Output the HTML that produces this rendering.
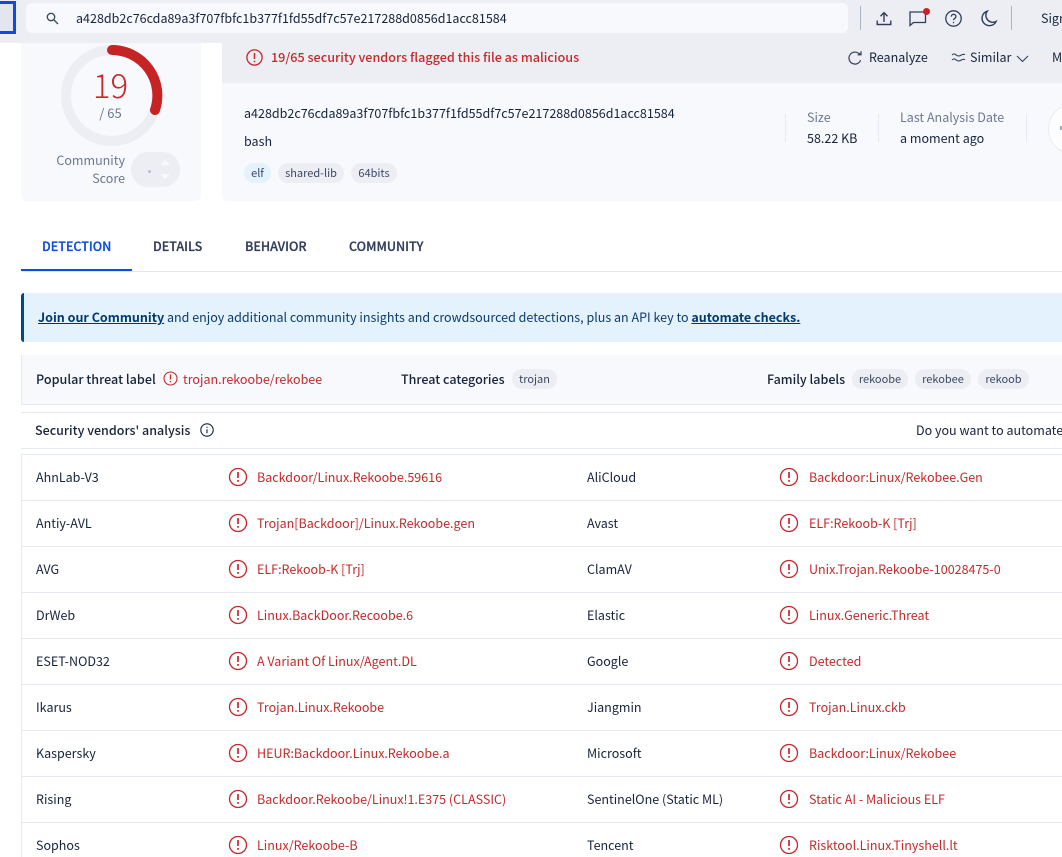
<!DOCTYPE html>
<html><head><meta charset="utf-8"><style>
html,body{margin:0;padding:0;background:#fff;}
#p{position:relative;width:1062px;height:857px;overflow:hidden;background:#fff;font-family:"Noto Sans CJK JP","Liberation Sans",sans-serif;font-size:12.52px;color:#313d5a;}
.a{position:absolute;white-space:nowrap;}
.t{line-height:18px;}
.r{color:#c4292c;}
.d{color:#16233b;}
.tab{font-size:12.5px;font-weight:500;-webkit-text-stroke:.25px currentColor;}
.pill{position:absolute;height:20px;line-height:21px;border-radius:10px;background:#eceef4;text-align:center;font-size:11px;color:#3b4762;}
.line{position:absolute;background:#e5e9f1;}
svg{position:absolute;overflow:visible;}
</style></head><body><div id="p">

<!-- summary cards -->
<div class="a" style="left:21px;top:43px;width:180px;height:158px;background:#f8f9fc;border-radius:0 0 6px 6px;"></div>
<div class="a" style="left:222px;top:43px;width:840px;height:158px;background:#f8f9fc;border-radius:0 0 0 6px;"></div>
<div class="a" style="left:222px;top:43px;width:840px;height:40px;background:#eceef4;"></div>

<!-- top bar -->
<div class="a" style="left:0;top:0;width:1062px;height:43px;background:#eceef4;"></div>
<div class="a" style="left:-6px;top:1px;width:16px;height:27px;border:3px solid #0b4de0;background:#e3e6ee;"></div>
<div class="a" style="left:26px;top:3px;width:822px;height:30px;background:#f8f9fc;border-radius:6px;"></div>
<svg style="left:46px;top:12px" width="13" height="13" viewBox="0 0 13 13" fill="none" stroke="#3b4762" stroke-width="1.3"><circle cx="5" cy="5" r="3.7"/><path d="M8 8l4 4"/></svg>
<div class="a t d" style="left:76px;top:9px;">a428db2c76cda89a3f707fbfc1b377f1fd55df7c57e217288d0856d1acc81584</div>
<div class="a" style="left:860px;top:6px;width:1px;height:24px;background:#aab4c8;"></div>
<div class="a" style="left:1011px;top:6px;width:1px;height:24px;background:#aab4c8;"></div>
<svg style="left:876px;top:11px" width="16" height="15" viewBox="0 0 16 15" fill="none" stroke="#313d5a" stroke-width="1.4"><path d="M8 11V2M4.5 5.2L8 1.6l3.5 3.6M1.2 9.5v4h13.6v-4"/></svg>
<svg style="left:909px;top:10px" width="18" height="16" viewBox="0 0 18 16" fill="none" stroke="#313d5a" stroke-width="1.3"><path d="M1 2h15.5v10.5H4.5L1 15.5z"/></svg>
<div class="a" style="left:923px;top:8px;width:7px;height:7px;border-radius:50%;background:#cc1f26;"></div>
<svg style="left:945px;top:10px" width="17" height="17" viewBox="0 0 17 17" fill="none" stroke="#313d5a" stroke-width="1.3"><circle cx="8.5" cy="8.5" r="7.7"/><path d="M6.3 6.6c0-3 4.6-3 4.6 0 0 1.9-2.4 1.700-2.400 3.700"/><path d="M8.500 12v1.200"/></svg>
<svg style="left:981px;top:10px" width="16" height="17" viewBox="0 0 16 17" fill="none" stroke="#313d5a" stroke-width="1.4"><path d="M6.200 1.200a7.400 7.400 0 1 0 8.900 10.300A7 7 0 0 1 6.200 1.200z"/></svg>
<div class="a t d" style="left:1041px;top:9px;">Sign in</div>

<!-- gauge -->
<svg style="left:60.500px;top:45px" width="102" height="102" viewBox="0 0 102 102" fill="none">
<circle cx="50.500" cy="50.500" r="45.500" stroke="#eceef4" stroke-width="10"/>
<path d="M51 5A45.500 45.500 0 0 1 94 65" stroke="#c62325" stroke-width="10" stroke-linecap="round"/>
</svg>
<div class="a r" style="left:60px;width:101px;text-align:center;top:64px;font-size:33px;line-height:40px;font-weight:300;">19</div>
<div class="a" style="left:60px;width:101px;text-align:center;top:104px;font-size:13px;line-height:18px;color:#6b7892;">/ 65</div>
<div class="a" style="left:40px;width:85px;text-align:right;top:151px;line-height:18px;color:#6b7892;">Community<br>Score</div>
<div class="a" style="left:131px;top:152px;width:49px;height:35px;border-radius:17px;background:#eceef4;"></div>
<div class="a" style="left:148px;top:170px;width:3px;height:3px;border-radius:50%;background:#b8bfce;"></div>
<svg style="left:159px;top:159px" width="12" height="21" viewBox="0 0 12 21" fill="#f8f9fc"><path d="M6 1l5 5H1zM1 15h10l-5 5z"/></svg>

<!-- banner row -->
<svg style="left:246px;top:49px" width="17" height="17" viewBox="0 0 17 17" fill="none" stroke="#c4292c" stroke-width="1.3"><circle cx="8.500" cy="8.500" r="7.600"/><path d="M8.500 4v6M8.500 11.800v1.400" stroke-width="1.500"/></svg>
<div class="a t r" style="left:271px;top:48px;font-size:12.620px;font-weight:500;">19/65 security vendors flagged this file as malicious</div>
<svg style="left:848px;top:50px" width="14" height="15" viewBox="0 0 14 15" fill="none" stroke="#313d5a" stroke-width="1.200"><path d="M12.600 10.200A6 6 0 1 1 10.500 3.200L13 4.600M13 1.200v3.600H9.500"/></svg>
<div class="a t d" style="left:869px;top:48px;">Reanalyze</div>
<svg style="left:951px;top:52px" width="15" height="11" viewBox="0 0 15 11" fill="none" stroke="#313d5a" stroke-width="1.100"><path d="M1 3c3-3 4 1 6.500 1S11 1.500 14 2.500M1 8c3-3 4 1 6.500 1S11 6.500 14 7.500"/></svg>
<div class="a t d" style="left:970px;top:48px;">Similar</div>
<svg style="left:1016px;top:55px" width="13" height="8" viewBox="0 0 13 8" fill="none" stroke="#313d5a" stroke-width="1.100"><path d="M1 1l5.500 5.500L12 1"/></svg>
<div class="a t d" style="left:1052px;top:48px;">More</div>

<!-- file info -->
<div class="a t d" style="left:244px;top:104px;">a428db2c76cda89a3f707fbfc1b377f1fd55df7c57e217288d0856d1acc81584</div>
<div class="a t d" style="left:244px;top:132px;">bash</div>
<div class="pill" style="left:244px;top:163px;width:27px;background:#e3f2fd;">elf</div>
<div class="pill" style="left:278px;top:163px;width:66px;">shared-lib</div>
<div class="pill" style="left:351px;top:163px;width:46px;">64bits</div>
<div class="a" style="left:785px;top:114px;width:1px;height:28px;background:#e5e9f1;"></div>
<div class="a" style="left:878px;top:114px;width:1px;height:28px;background:#e5e9f1;"></div>
<div class="a" style="left:1026px;top:114px;width:1px;height:28px;background:#e5e9f1;"></div>
<div class="a t" style="left:807px;top:108px;color:#6b7892;">Size</div>
<div class="a t d" style="left:807px;top:129px;">58.22 KB</div>
<div class="a t" style="left:900px;top:108px;color:#6b7892;">Last Analysis Date</div>
<div class="a t d" style="left:900px;top:129px;">a moment ago</div>
<div class="a" style="left:1048px;top:103px;width:50px;height:50px;border-radius:50%;background:#fdfdfe;border:1px solid #e9ecf3;"></div>
<div class="a" style="left:1060px;top:126px;width:2px;height:4px;background:#a3abba;"></div>

<!-- tabs -->
<div class="a" style="left:21px;top:271px;width:1041px;height:1px;background:#e5e7ec;"></div>
<div class="a" style="left:21px;top:269px;width:111px;height:2px;background:#0b4de0;"></div>
<div class="a t tab" style="left:42px;top:237px;color:#0b4de0;">DETECTION</div>
<div class="a t tab" style="left:153px;top:237px;">DETAILS</div>
<div class="a t tab" style="left:245px;top:237px;">BEHAVIOR</div>
<div class="a t tab" style="left:349px;top:237px;">COMMUNITY</div>

<!-- community banner -->
<div class="a" style="left:21px;top:293px;width:1041px;height:49px;background:#e3f2fd;border-left:3px solid #004a87;box-sizing:border-box;border-radius:3px 0 0 3px;"></div>
<div class="a t" style="left:38px;top:308px;color:#0d3c6b;"><b style="font-weight:700;text-decoration:underline;color:#003a70;">Join our Community</b> and enjoy additional community insights and crowdsourced detections, plus an API key to <b style="font-weight:700;text-decoration:underline;color:#003a70;">automate checks.</b></div>

<!-- threat labels -->
<div class="a" style="left:21px;top:355px;width:1041px;height:50px;background:#f8f9fc;border-left:1px solid #e5e9f1;border-bottom:1px solid #e5e9f1;box-sizing:border-box;"></div>
<div class="a t d" style="left:36px;top:370px;font-size:12.600px;font-weight:500;">Popular threat label</div>
<svg style="left:163px;top:371px" width="15" height="15" viewBox="0 0 15 15" fill="none" stroke="#c4292c" stroke-width="1.100"><circle cx="7.500" cy="7.500" r="6.500"/><path d="M7.500 3.500v5M7.500 10v1.200" stroke-width="1.300"/></svg>
<div class="a t r" style="left:183px;top:370px;">trojan.rekoobe/rekobee</div>
<div class="a t d" style="left:401px;top:370px;font-weight:500;">Threat categories</div>
<div class="pill" style="left:512px;top:369px;width:45px;">trojan</div>
<div class="a t d" style="left:767px;top:370px;font-weight:500;">Family labels</div>
<div class="pill" style="left:852px;top:369px;width:56px;">rekoobe</div>
<div class="pill" style="left:915px;top:369px;width:56px;">rekobee</div>
<div class="pill" style="left:978px;top:369px;width:51px;">rekoob</div>

<!-- vendors header -->
<div class="a" style="left:21px;top:412px;width:1041px;height:1px;background:#e5e9f1;"></div>
<div class="a" style="left:21px;top:448px;width:1041px;height:1px;background:#e5e9f1;"></div>
<div class="a t d" style="left:35px;top:421px;font-weight:500;">Security vendors' analysis</div>
<svg style="left:200px;top:423px" width="14" height="14" viewBox="0 0 14 14" fill="none" stroke="#16233b" stroke-width="1.100"><circle cx="7" cy="7" r="6.200"/><path d="M7 6.200v4M7 3.600v1.300"/></svg>
<div class="a t d" style="left:916px;top:421px;">Do you want to automate checks?</div>

<!-- table -->
<div class="a" style="left:21px;top:454px;width:1041px;height:1px;background:#e5e9f1;"></div>
<div class="a" style="left:21px;top:454px;width:1px;height:403px;background:#e5e9f1;"></div>
<div class="line" style="left:21px;top:500px;width:1041px;height:1px;"></div>
<div class="line" style="left:21px;top:546px;width:1041px;height:1px;"></div>
<div class="line" style="left:21px;top:592px;width:1041px;height:1px;"></div>
<div class="line" style="left:21px;top:638px;width:1041px;height:1px;"></div>
<div class="line" style="left:21px;top:684px;width:1041px;height:1px;"></div>
<div class="line" style="left:21px;top:730px;width:1041px;height:1px;"></div>
<div class="line" style="left:21px;top:776px;width:1041px;height:1px;"></div>
<div class="line" style="left:21px;top:822px;width:1041px;height:1px;"></div>

<svg style="left:0;top:0" width="1062" height="857" fill="none" stroke="#c4292c">
<defs><g id="w"><circle r="8.500" stroke-width="1.300"/><path d="M0-5v6M0 3v1.800" stroke-width="1.700"/></g></defs>
<use href="#w" x="238" y="477"/><use href="#w" x="789" y="477"/>
<use href="#w" x="238" y="523"/><use href="#w" x="789" y="523"/>
<use href="#w" x="238" y="569"/><use href="#w" x="789" y="569"/>
<use href="#w" x="238" y="615"/><use href="#w" x="789" y="615"/>
<use href="#w" x="238" y="661"/><use href="#w" x="789" y="661"/>
<use href="#w" x="238" y="707"/><use href="#w" x="789" y="707"/>
<use href="#w" x="238" y="753"/><use href="#w" x="789" y="753"/>
<use href="#w" x="238" y="799"/><use href="#w" x="789" y="799"/>
<use href="#w" x="238" y="845"/><use href="#w" x="789" y="845"/>
</svg>

<div class="a t d" style="left:36px;top:468px;">AhnLab-V3</div><div class="a t r" style="left:257px;top:468px;">Backdoor/Linux.Rekoobe.59616</div><div class="a t d" style="left:587px;top:468px;">AliCloud</div><div class="a t r" style="left:809px;top:468px;">Backdoor:Linux/Rekobee.Gen</div>
<div class="a t d" style="left:36px;top:514px;">Antiy-AVL</div><div class="a t r" style="left:257px;top:514px;">Trojan[Backdoor]/Linux.Rekoobe.gen</div><div class="a t d" style="left:587px;top:514px;">Avast</div><div class="a t r" style="left:809px;top:514px;">ELF:Rekoob-K [Trj]</div>
<div class="a t d" style="left:36px;top:560px;">AVG</div><div class="a t r" style="left:257px;top:560px;">ELF:Rekoob-K [Trj]</div><div class="a t d" style="left:587px;top:560px;">ClamAV</div><div class="a t r" style="left:809px;top:560px;">Unix.Trojan.Rekoobe-10028475-0</div>
<div class="a t d" style="left:36px;top:606px;">DrWeb</div><div class="a t r" style="left:257px;top:606px;">Linux.BackDoor.Recoobe.6</div><div class="a t d" style="left:587px;top:606px;">Elastic</div><div class="a t r" style="left:809px;top:606px;">Linux.Generic.Threat</div>
<div class="a t d" style="left:36px;top:652px;">ESET-NOD32</div><div class="a t r" style="left:257px;top:652px;">A Variant Of Linux/Agent.DL</div><div class="a t d" style="left:587px;top:652px;">Google</div><div class="a t r" style="left:809px;top:652px;">Detected</div>
<div class="a t d" style="left:36px;top:698px;">Ikarus</div><div class="a t r" style="left:257px;top:698px;">Trojan.Linux.Rekoobe</div><div class="a t d" style="left:587px;top:698px;">Jiangmin</div><div class="a t r" style="left:809px;top:698px;">Trojan.Linux.ckb</div>
<div class="a t d" style="left:36px;top:744px;">Kaspersky</div><div class="a t r" style="left:257px;top:744px;">HEUR:Backdoor.Linux.Rekoobe.a</div><div class="a t d" style="left:587px;top:744px;">Microsoft</div><div class="a t r" style="left:809px;top:744px;">Backdoor:Linux/Rekobee</div>
<div class="a t d" style="left:36px;top:790px;">Rising</div><div class="a t r" style="left:257px;top:790px;">Backdoor.Rekoobe/Linux!1.E375 (CLASSIC)</div><div class="a t d" style="left:587px;top:790px;">SentinelOne (Static ML)</div><div class="a t r" style="left:809px;top:790px;">Static AI - Malicious ELF</div>
<div class="a t d" style="left:36px;top:836px;">Sophos</div><div class="a t r" style="left:257px;top:836px;">Linux/Rekoobe-B</div><div class="a t d" style="left:587px;top:836px;">Tencent</div><div class="a t r" style="left:809px;top:836px;">Risktool.Linux.Tinyshell.lt</div>

</div></body></html>
